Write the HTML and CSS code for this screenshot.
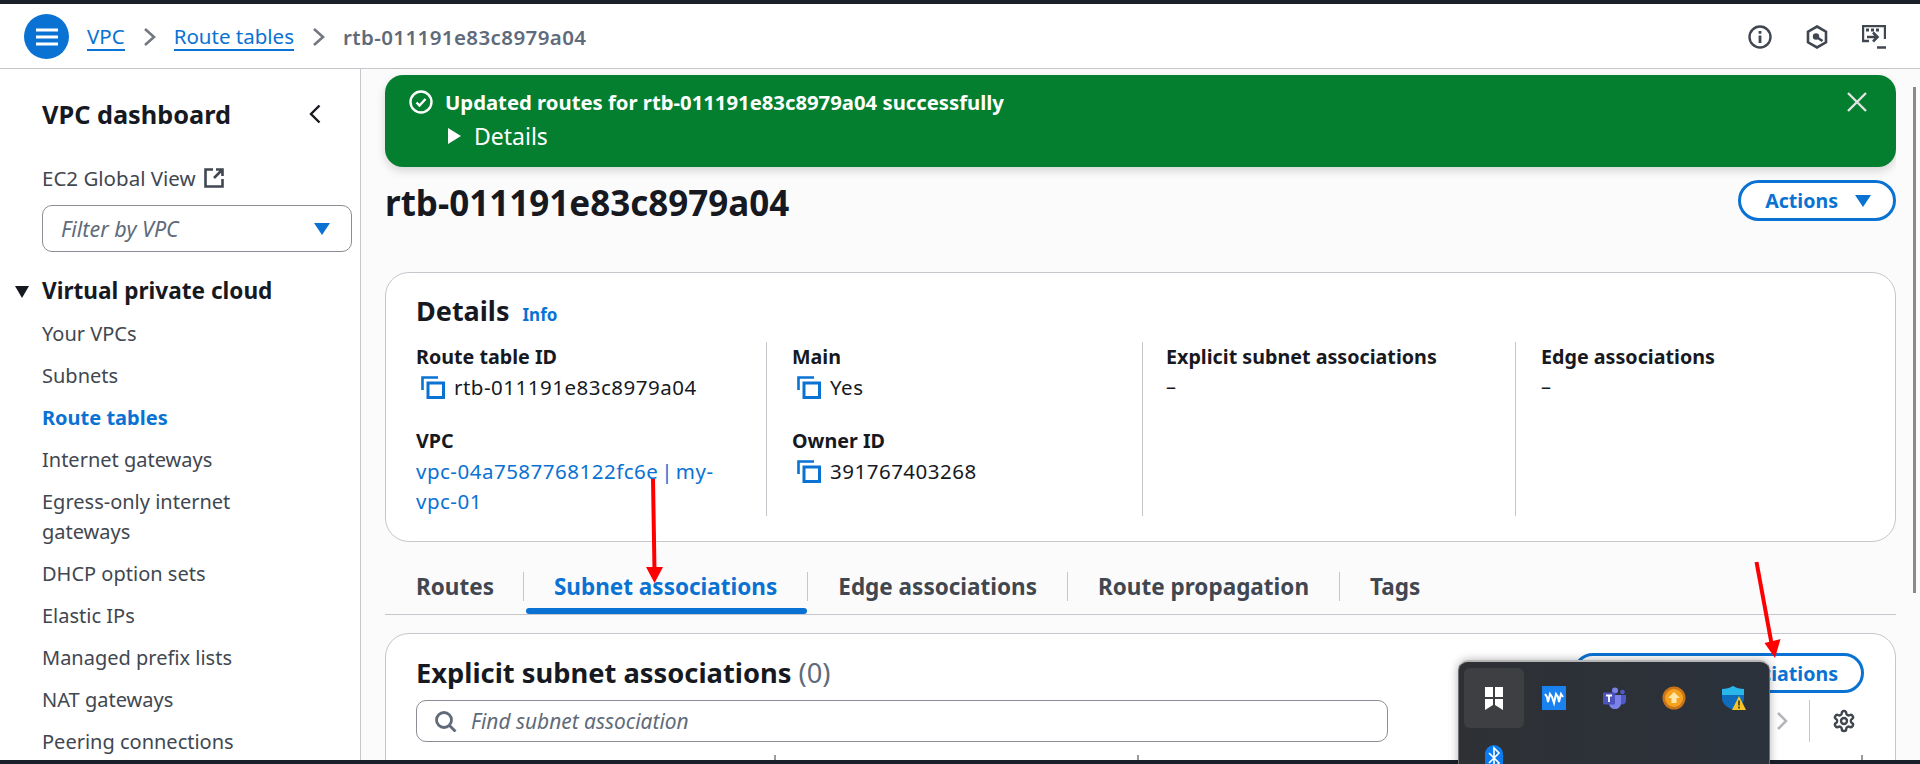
FILE: index.html
```html
<!DOCTYPE html>
<html lang="en">
<head>
  <meta charset="UTF-8">
  <title>rtb-011191e83c8979a04 | VPC</title>
  <link rel="stylesheet" href="styles.css">
</head>
<body>
  <div class="window">
    <header class="topbar">
      <button class="menu-btn" aria-label="Menu">
        <svg width="22" height="18" viewBox="0 0 22 18"><path d="M0 2h22M0 9h22M0 16h22" stroke="#fff" stroke-width="3"/></svg>
      </button>
      <nav class="crumbs">
        <a href="#">VPC</a>
        <svg width="13" height="20" viewBox="0 0 13 20"><path d="M2 2l9 8-9 8" fill="none" stroke="#73777f" stroke-width="2.6"/></svg>
        <a href="#">Route tables</a>
        <svg width="13" height="20" viewBox="0 0 13 20"><path d="M2 2l9 8-9 8" fill="none" stroke="#73777f" stroke-width="2.6"/></svg>
        <span>rtb-011191e83c8979a04</span>
      </nav>
      <div class="top-icons">
        <svg width="24" height="24" viewBox="0 0 24 24"><circle cx="12" cy="12" r="10.5" fill="none" stroke="#414750" stroke-width="2.4"/><path d="M12 10.500V18M12 6v2.800" stroke="#414750" stroke-width="2.8"/></svg>
        <svg width="22" height="24" viewBox="0 0 22 24"><path d="M11 1.500l9 5.200v10.600l-9 5.200-9-5.200V6.700z" fill="none" stroke="#414750" stroke-width="2.6"/><path d="M16.500 16l-6-4" stroke="#414750" stroke-width="2.6"/><circle cx="10" cy="11.500" r="3.200" fill="#414750"/></svg>
        <svg width="24" height="24" viewBox="0 0 24 24"><path d="M7 16H1V1h22v13" fill="none" stroke="#414750" stroke-width="2.4"/><path d="M4 5h3M9 5h3M14 5h3" stroke="#414750" stroke-width="3"/><path d="M5 12h10M11 7.500l4.500 4.500-4.500 4.500M15 22.500h9" fill="none" stroke="#414750" stroke-width="2.6"/></svg>
      </div>
    </header>

    <div class="layout">
      <aside class="sidenav">
        <div class="nav-head">
          <h2>VPC dashboard</h2>
          <svg width="12" height="20" viewBox="0 0 12 20"><path d="M10.500 1.500L2 10l8.500 8.500" fill="none" stroke="#16191f" stroke-width="2.4"/></svg>
        </div>
        <div class="global">EC2 Global View
          <svg width="20" height="20" viewBox="0 0 20 20"><path d="M9 1.500H1.500v17h17V11" fill="none" stroke="#414750" stroke-width="2.600"/><path d="M12 1.500h6.500V8M18 2l-8 8" fill="none" stroke="#414750" stroke-width="2.600"/></svg>
        </div>
        <div class="vpc-filter"><em>Filter by VPC</em><span class="caret"></span></div>
        <div class="nav-section"><span class="section-caret"></span>Virtual private cloud</div>
        <ul class="nav-list">
          <li>Your VPCs</li>
          <li>Subnets</li>
          <li class="active">Route tables</li>
          <li>Internet gateways</li>
          <li>Egress-only internet gateways</li>
          <li>DHCP option sets</li>
          <li>Elastic IPs</li>
          <li>Managed prefix lists</li>
          <li>NAT gateways</li>
          <li>Peering connections</li>
        </ul>
      </aside>

      <main class="content">
        <div class="flash">
          <svg class="flash-icon" width="24" height="24" viewBox="0 0 24 24"><circle cx="12" cy="12" r="10.5" fill="none" stroke="#fff" stroke-width="2.4"/><path d="M7.500 12.500l3 3 6-6.500" fill="none" stroke="#fff" stroke-width="2.400"/></svg>
          <div class="flash-body">
            <strong>Updated routes for rtb-011191e83c8979a04 successfully</strong>
            <div class="flash-details"><span class="tri-right"></span>Details</div>
          </div>
          <svg class="flash-close" width="20" height="20" viewBox="0 0 20 20"><path d="M1 1l18 18M19 1L1 19" stroke="#e4e4e4" stroke-width="2.400"/></svg>
        </div>

        <div class="page-head">
          <h1>rtb-011191e83c8979a04</h1>
          <button class="btn">Actions<span class="caret"></span></button>
        </div>

        <section class="card details">
          <h2>Details <a href="#">Info</a></h2>
          <div class="detail-grid">
            <div class="detail-col">
              <div class="kv">
                <label>Route table ID</label>
                <div class="copy"><svg width="24" height="23" viewBox="0 0 24 23"><path d="M1.500 14V1.500H17" fill="none" stroke="#0972d3" stroke-width="2.600"/><rect x="7" y="7" width="15.500" height="14.500" fill="none" stroke="#0972d3" stroke-width="3"/></svg>rtb-011191e83c8979a04</div>
              </div>
              <div class="kv">
                <label>VPC</label>
                <a class="vpc-link" href="#">vpc-04a7587768122fc6e | my-vpc-01</a>
              </div>
            </div>
            <div class="detail-col">
              <div class="kv">
                <label>Main</label>
                <div class="copy"><svg width="24" height="23" viewBox="0 0 24 23"><path d="M1.500 14V1.500H17" fill="none" stroke="#0972d3" stroke-width="2.600"/><rect x="7" y="7" width="15.500" height="14.500" fill="none" stroke="#0972d3" stroke-width="3"/></svg>Yes</div>
              </div>
              <div class="kv">
                <label>Owner ID</label>
                <div class="copy"><svg width="24" height="23" viewBox="0 0 24 23"><path d="M1.500 14V1.500H17" fill="none" stroke="#0972d3" stroke-width="2.600"/><rect x="7" y="7" width="15.500" height="14.500" fill="none" stroke="#0972d3" stroke-width="3"/></svg>391767403268</div>
              </div>
            </div>
            <div class="detail-col">
              <div class="kv">
                <label>Explicit subnet associations</label>
                <div>–</div>
              </div>
            </div>
            <div class="detail-col">
              <div class="kv">
                <label>Edge associations</label>
                <div>–</div>
              </div>
            </div>
          </div>
        </section>

        <div class="tabs">
          <span class="tab">Routes</span>
          <span class="tab active">Subnet associations</span>
          <span class="tab">Edge associations</span>
          <span class="tab">Route propagation</span>
          <span class="tab">Tags</span>
        </div>

        <section class="card assoc">
          <div class="assoc-head">
            <h2>Explicit subnet associations <span>(0)</span></h2>
            <button class="btn">Edit subnet associations</button>
          </div>
          <div class="assoc-tools">
            <div class="search">
              <svg width="22" height="21" viewBox="0 0 22 21"><circle cx="9" cy="9" r="7.500" fill="none" stroke="#5f6b7a" stroke-width="2.800"/><path d="M14.500 14.500l6 6" stroke="#5f6b7a" stroke-width="2.800"/></svg>
              <em>Find subnet association</em>
            </div>
            <div class="pager">
              <svg width="12" height="20" viewBox="0 0 12 20"><path d="M2 2l8 8-8 8" fill="none" stroke="#b4b6bb" stroke-width="2.600"/></svg>
              <div class="prefs">
                <svg width="24" height="24" viewBox="0 0 24 24" fill="none" stroke="#414750" stroke-width="2.400"><path d="M12.220 2h-.44a2 2 0 0 0-2 2v.18a2 2 0 0 1-1 1.730l-.43.250a2 2 0 0 1-2 0l-.15-.08a2 2 0 0 0-2.730.730l-.22.380a2 2 0 0 0 .730 2.730l.15.100a2 2 0 0 1 1 1.720v.510a2 2 0 0 1-1 1.740l-.15.090a2 2 0 0 0-.730 2.730l.22.380a2 2 0 0 0 2.730.730l.15-.08a2 2 0 0 1 2 0l.43.250a2 2 0 0 1 1 1.730V20a2 2 0 0 0 2 2h.44a2 2 0 0 0 2-2v-.18a2 2 0 0 1 1-1.730l.43-.25a2 2 0 0 1 2 0l.15.080a2 2 0 0 0 2.730-.730l.22-.39a2 2 0 0 0-.730-2.730l-.15-.08a2 2 0 0 1-1-1.740v-.5a2 2 0 0 1 1-1.740l.15-.09a2 2 0 0 0 .730-2.730l-.22-.38a2 2 0 0 0-2.730-.730l-.15.080a2 2 0 0 1-2 0l-.43-.25a2 2 0 0 1-1-1.730V4a2 2 0 0 0-2-2z"/><circle cx="12" cy="12" r="3"/></svg>
              </div>
            </div>
          </div>
          <div class="table-ticks"><i></i><i></i><i></i></div>
        </section>
      </main>
      <div class="scroll"><i></i></div>
    </div>
  </div>

  <!-- things drawn over the page when it was captured -->
  <svg class="arrow arrow-a" width="22" height="108" viewBox="0 0 22 108"><path d="M9 2l1.500 92" stroke="#f00" stroke-width="4"/><path d="M2 90h17l-8.500 16z" fill="#f00"/></svg>
  <svg class="arrow arrow-b" width="34" height="100" viewBox="0 0 34 100"><path d="M6.500 2L22 86" stroke="#f00" stroke-width="4"/><path d="M14.500 83l16-4L25 98z" fill="#f00"/></svg>

  <div class="tray">
    <div class="tray-cell selected">
      <svg width="18" height="23" viewBox="0 0 18 23"><path d="M0 0h8v10H0zM10 0h8v10h-8zM0 12h8v6l-8 5zM10 12h8v11l-8-5z" fill="#fff"/></svg>
    </div>
    <div class="tray-cell">
      <svg width="24" height="24" viewBox="0 0 24 24"><rect width="24" height="24" fill="#1a82f0"/><path d="M3 8l2 3 1 5 2-8 2 3 2 6 2-9 2 3 1 5 2-8 2 3" fill="none" stroke="#fff" stroke-width="2"/></svg>
    </div>
    <div class="tray-cell">
      <svg width="23" height="22" viewBox="0 0 23 22"><circle cx="12" cy="3.500" r="3" fill="#7b83eb"/><circle cx="19.500" cy="5" r="2.300" fill="#5059c9"/><path d="M16 8h7v6c0 3-3 4-7 3z" fill="#5059c9"/><path d="M6 8h12v8c0 4-3 6-6 6s-6-2-6-6z" fill="#7b83eb"/><rect y="5.500" width="12" height="12" rx="1" fill="#4b53bc"/><path d="M3 8.500h6M6 8.500v6.500" stroke="#fff" stroke-width="1.800"/></svg>
    </div>
    <div class="tray-cell">
      <svg width="24" height="24" viewBox="0 0 24 24"><circle cx="12" cy="12" r="11.500" fill="#c9731a"/><circle cx="12" cy="12" r="9" fill="#f6a21e"/><path d="M12 6l6 6h-3.500v5h-5v-5H6z" fill="#ffe9a8"/></svg>
    </div>
    <div class="tray-cell">
      <svg width="24" height="24" viewBox="0 0 24 24"><path d="M11 0c3 2 6 3 11 3v9c0 6-5 9-11 12C5 21 0 18 0 12V3c5 0 8-1 11-3z" fill="#0f6cbd"/><path d="M11 0c3 2 6 3 11 3v6H0V3c5 0 8-1 11-3z" fill="#29b6e8"/><path d="M17 10l7 14H10z" fill="#f7c325"/><path d="M17 14.500v5M17 20.500v2" stroke="#222" stroke-width="1.400"/></svg>
    </div>
    <div class="tray-cell">
      <svg width="18" height="26" viewBox="0 0 18 26"><rect width="18" height="26" rx="9" fill="#0a7cf0"/><path d="M4 8l10 10-5 5V3l5 5L4 18" fill="none" stroke="#fff" stroke-width="1.600"/></svg>
    </div>
  </div>
</body>
</html>
```

FILE: styles.css
```css
* {
  box-sizing: border-box;
}

html, body {
  margin: 0;
  height: 100%;
  overflow: hidden;
}

body {
  position: relative;
  padding-top: 4px;
  font-family: "Noto Sans", "Open Sans", sans-serif;
  font-size: 20px;
  color: #16191f;
  background: #1a2029;
}

a {
  color: #0972d3;
  text-decoration: none;
}

h1, h2 {
  margin: 0;
}

button {
  font-family: inherit;
}

.window {
  height: 756px;
  background: #fff;
  overflow: hidden;
  display: flex;
  flex-direction: column;
}

/* top bar */
.topbar {
  height: 65px;
  flex: none;
  display: flex;
  align-items: center;
  padding: 1px 34px 0 24px;
  border-bottom: 1px solid #c6c6cd;
}

.menu-btn {
  width: 45px;
  height: 45px;
  flex: none;
  border: 0;
  border-radius: 50%;
  background: #0972d3;
  display: flex;
  align-items: center;
  justify-content: center;
  padding: 0;
}

.crumbs {
  margin-left: 18px;
  display: flex;
  align-items: center;
  gap: 18px;
  font-size: 20.5px;
  color: #5f6b7a;
}

.crumbs span {
  font-weight: 600;
  letter-spacing: 0.4px;
}

.crumbs a {
  border-bottom: 2px solid #0972d3;
  line-height: 26px;
}

.top-icons {
  margin-left: auto;
  display: flex;
  gap: 34px;
}

/* side navigation */
.layout {
  flex: 1;
  display: flex;
  min-height: 0;
}

.sidenav {
  width: 361px;
  flex: none;
  background: #fff;
  border-right: 1px solid #c6c6cd;
  padding: 27px 0 0 42px;
}

.nav-head {
  display: flex;
  align-items: center;
  justify-content: space-between;
  padding-right: 39px;
}

.nav-head h2 {
  font-size: 25.3px;
  font-weight: 700;
  line-height: 36px;
}

.global {
  margin-top: 31px;
  display: flex;
  align-items: center;
  gap: 8px;
  color: #414750;
  font-size: 20.5px;
  line-height: 30px;
}

.vpc-filter {
  width: 310px;
  height: 47px;
  margin-top: 12px;
  padding: 0 21px 0 18px;
  border: 1px solid #8c8c94;
  border-radius: 10px;
  display: flex;
  align-items: center;
  justify-content: space-between;
  color: #5f6b7a;
  font-size: 21.5px;
}

.caret {
  width: 0;
  height: 0;
  border-left: 8px solid transparent;
  border-right: 8px solid transparent;
  border-top: 12px solid #0972d3;
}

.nav-section {
  position: relative;
  margin-top: 24px;
  font-size: 22.6px;
  font-weight: 700;
  line-height: 30px;
}

.section-caret {
  position: absolute;
  left: -27px;
  top: 10px;
  width: 0;
  height: 0;
  border-left: 7px solid transparent;
  border-right: 7px solid transparent;
  border-top: 12px solid #16191f;
}

.nav-list {
  list-style: none;
  margin: 7px 0 0;
  padding: 0 50px 0 0;
  line-height: 30px;
  color: #414750;
}

.nav-list li {
  padding: 6px 0;
}

.nav-list .active {
  color: #0972d3;
  font-weight: 700;
}

/* main column */
.content {
  flex: 1;
  min-width: 0;
  background: #fbfbfc;
  padding: 6px 0 0 24px;
}

.flash {
  height: 92px;
  border-radius: 18px;
  background: #037f2f;
  color: #fff;
  display: flex;
  padding: 14px 29px 0 24px;
  box-shadow: 0 4px 10px rgba(0, 0, 0, .15);
}

.flash-icon {
  margin-top: 1px;
}

.flash-body {
  margin-left: 12px;
  flex: 1;
}

.flash-body strong {
  font-size: 20.3px;
  display: block;
  line-height: 26px;
}

.flash-details {
  display: flex;
  align-items: center;
  gap: 13px;
  font-size: 23px;
  margin-top: 6px;
  line-height: 30px;
}

.tri-right {
  width: 0;
  height: 0;
  border-top: 8px solid transparent;
  border-bottom: 8px solid transparent;
  border-left: 13px solid #fff;
  margin-left: 3px;
}

.flash-close {
  margin-top: 3px;
}

.page-head {
  display: flex;
  justify-content: space-between;
  align-items: flex-start;
  margin-top: 11px;
}

.page-head h1 {
  font-size: 35px;
  font-weight: 700;
  line-height: 50px;
}

.page-head .btn {
  margin-top: 2px;
}

.btn {
  height: 41px;
  padding: 0 22px 0 24px;
  border: 3px solid #0972d3;
  border-radius: 22px;
  background: #fff;
  color: #0972d3;
  font-size: 19.6px;
  font-weight: 700;
  display: inline-flex;
  align-items: center;
  gap: 17px;
}

.card {
  background: #fff;
  border: 1px solid #c6c6cd;
  border-radius: 24px;
}

.details {
  margin-top: 44px;
  height: 270px;
  padding: 18px 31px 0 30px;
}

.details h2 {
  height: 40px;
  font-size: 27px;
  font-weight: 700;
  line-height: 40px;
}

.details h2 a {
  font-size: 17px;
  margin-left: 6px;
}

.detail-grid {
  display: grid;
  grid-template-columns: 350px 376px 373px 1fr;
  margin-top: 11px;
}

.detail-col {
  padding-left: 25px;
  height: 174px;
  border-left: 1px solid #c6c6cd;
}

.detail-col:first-child {
  padding-left: 0;
  padding-right: 30px;
  border-left: 0;
}

.detail-col:nth-child(3) {
  padding-left: 23px;
}

.kv {
  margin-bottom: 24px;
  line-height: 30px;
}

.kv label {
  display: block;
  font-size: 19.7px;
  font-weight: 700;
}

.copy, .vpc-link {
  font-size: 20.5px;
  letter-spacing: 0.5px;
}

.copy {
  display: flex;
  align-items: center;
  gap: 9px;
  padding-left: 5px;
}

.vpc-link {
  display: block;
  word-spacing: -3px;
}

/* tabs */
.tabs {
  display: flex;
  align-items: flex-start;
  height: 73px;
  padding-top: 30px;
  border-bottom: 1px solid #c6c6cd;
  font-size: 22.5px;
  font-weight: 700;
  color: #414750;
}

.tab {
  position: relative;
  padding: 0 30px;
  line-height: 29px;
  border-left: 1px solid #c6c6cd;
}

.tab:first-child {
  padding: 0 29px 0 31px;
  border-left: 0;
}

.tab.active {
  color: #0972d3;
}

.tab.active::after {
  content: "";
  position: absolute;
  left: 2px;
  right: 0;
  top: 36px;
  height: 6px;
  border-radius: 3px;
  background: #0972d3;
}

/* associations table */
.assoc {
  margin-top: 18px;
  height: 200px;
  padding: 19px 31px 0 30px;
}

.assoc-head {
  display: flex;
  align-items: center;
  justify-content: space-between;
  height: 40px;
}

.assoc-head h2 {
  font-size: 27.3px;
  font-weight: 700;
  line-height: 40px;
}

.assoc-head h2 span {
  font-weight: 400;
  color: #5f6b7a;
}

.assoc-head .btn {
  height: 40px;
  padding: 0 23px 0 26px;
}

.assoc-tools {
  display: flex;
  align-items: center;
  justify-content: space-between;
  margin-top: 7px;
}

.search {
  width: 972px;
  height: 42px;
  padding: 0 15px 0 18px;
  border: 1px solid #8c8c94;
  border-radius: 10px;
  display: flex;
  align-items: center;
  gap: 14px;
  color: #5f6b7a;
  font-size: 20.9px;
}

.pager {
  display: flex;
  align-items: center;
  gap: 21px;
  height: 42px;
  margin-right: 8px;
}

.prefs {
  display: flex;
  align-items: center;
  height: 42px;
  padding-left: 22px;
  border-left: 1px solid #c6c6cd;
}

.table-ticks {
  display: grid;
  grid-template-columns: 360px 363px 724px;
  height: 20px;
  margin-top: 13px;
}

.table-ticks i {
  border-right: 2px solid #9a9aa2;
}

.scroll {
  width: 24px;
  flex: none;
  background: #fbfbfc;
  padding: 18px 0 0 17px;
}

.scroll i {
  display: block;
  width: 3px;
  height: 506px;
  background: #8a8a8a;
}

/* overlays */
.arrow {
  position: absolute;
}

.arrow-a {
  left: 644px;
  top: 477px;
}

.arrow-b {
  left: 1750px;
  top: 560px;
}

.tray {
  position: absolute;
  left: 1458px;
  top: 660px;
  width: 312px;
  height: 120px;
  padding: 6px 5px;
  background: linear-gradient(90deg, #2e3034, #2b323c);
  border: 1px solid #6e6f72;
  border-top: 2px solid #b5b5b5;
  border-radius: 10px;
  box-shadow: 0 0 10px rgba(0, 0, 0, .3);
  display: grid;
  grid-template-columns: repeat(5, 60px);
  grid-auto-rows: 60px;
}

.tray-cell {
  display: flex;
  align-items: center;
  justify-content: center;
}

.tray-cell.selected {
  background: #3d3f43;
  border-radius: 6px;
}
```
